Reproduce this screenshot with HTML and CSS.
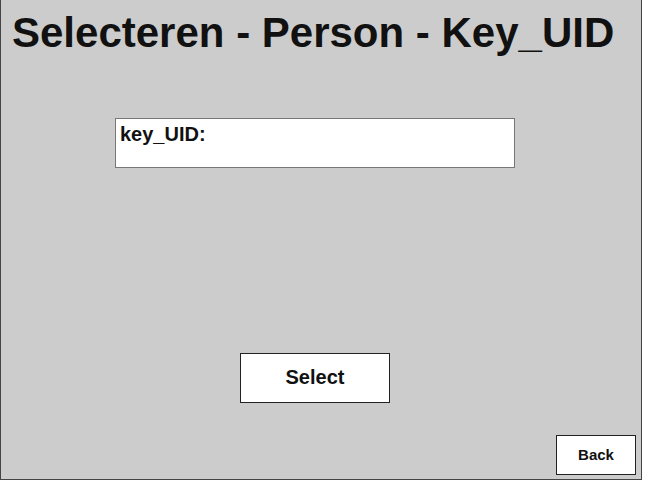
FILE: index.html
```html
<!DOCTYPE html>
<html>
<head>
<meta charset="utf-8">
<link rel="stylesheet" href="styles.css">
</head>
<body>
<div class="panel">
  <h1 class="title">Selecteren - Person - Key_UID</h1>
  <div class="field">
    <label class="field-label">key_UID:</label>
  </div>
  <button class="btn btn-select">Select</button>
  <div class="footer">
    <button class="btn btn-back">Back</button>
  </div>
</div>
</body>
</html>
```
FILE: styles.css
```css
html, body {
  margin: 0;
  padding: 0;
  background: #ffffff;
}
body {
  font-family: "Liberation Sans", Arial, sans-serif;
}
.panel {
  box-sizing: border-box;
  width: 642px;
  height: 480px;
  background: #cccccc;
  border-left: 1px solid #444444;
  border-right: 1px solid #444444;
  border-bottom: 1px solid #444444;
  display: flex;
  flex-direction: column;
}
.title {
  margin: 10px 0 0 11px;
  font-size: 42px;
  font-weight: bold;
  line-height: 46px;
  color: #111111;
}
.field {
  box-sizing: border-box;
  margin: 62px 0 0 114px;
  width: 400px;
  height: 50px;
  background: #ffffff;
  border: 1px solid #777777;
  padding: 3px 4px 0;
}
.field-label {
  font-size: 20px;
  font-weight: bold;
  color: #111111;
  line-height: 24px;
}
.btn {
  box-sizing: border-box;
  background: #ffffff;
  border: 1px solid #222222;
  font-family: "Liberation Sans", Arial, sans-serif;
  font-weight: bold;
  color: #111111;
  padding: 0;
  border-radius: 0;
}
.btn-select {
  margin: 185px 0 0 239px;
  width: 150px;
  height: 50px;
  font-size: 20px;
  padding-bottom: 2px;
}
.footer {
  display: flex;
  justify-content: flex-end;
  margin: 32px 5px 0 0;
}
.btn-back {
  width: 80px;
  height: 40px;
  font-size: 15px;
  padding-bottom: 2px;
}
```
